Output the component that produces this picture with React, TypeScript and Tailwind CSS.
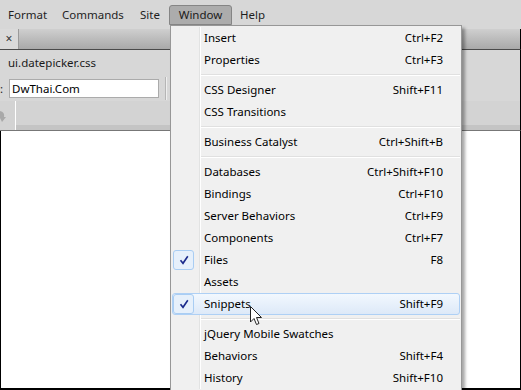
import React from "react";

const font = { fontFamily: '"Noto Sans", "Open Sans", sans-serif' };

type Item = { label?: string; sc?: string; check?: boolean; hl?: boolean; sep?: boolean };

const items: Item[] = [
  { label: "Insert", sc: "Ctrl+F2" },
  { label: "Properties", sc: "Ctrl+F3" },
  { sep: true },
  { label: "CSS Designer", sc: "Shift+F11" },
  { label: "CSS Transitions" },
  { sep: true },
  { label: "Business Catalyst", sc: "Ctrl+Shift+B" },
  { sep: true },
  { label: "Databases", sc: "Ctrl+Shift+F10" },
  { label: "Bindings", sc: "Ctrl+F10" },
  { label: "Server Behaviors", sc: "Ctrl+F9" },
  { label: "Components", sc: "Ctrl+F7" },
  { label: "Files", sc: "F8", check: true },
  { label: "Assets" },
  { label: "Snippets", sc: "Shift+F9", check: true, hl: true },
  { sep: true },
  { label: "jQuery Mobile Swatches" },
  { label: "Behaviors", sc: "Shift+F4" },
  { label: "History", sc: "Shift+F10" },
];

function Check() {
  return (
    <div className="w-[21px] h-[20px] ml-[1px] rounded-[3px] border border-[#a9cdf3] bg-[#e6f0fb] flex items-center justify-center">
      <svg width="10" height="10" viewBox="0 0 10 10">
        <path d="M1.5 5.2 L4 8.3 L8.8 1.2" fill="none" stroke="#1a2a8c" strokeWidth="1.6" />
      </svg>
    </div>
  );
}

function Row({ it }: { it: Item }) {
  if (it.sep) {
    return (
      <div className="h-[8px] flex">
        <div className="w-[27px]" />
        <div className="w-[1px] bg-[#e2e3e3]" />
        <div className="w-[1px] bg-white" />
        <div className="flex-1 flex flex-col pt-[3px]">
          <div className="h-[1px] bg-[#e0e0e0]" />
          <div className="h-[1px] bg-white" />
        </div>
      </div>
    );
  }
  return (
    <div
      className={
        "h-[22px] flex items-center text-[11.5px] text-[#000] " +
        (it.hl ? "rounded-[3px] border border-[#aed0f5] bg-gradient-to-b from-[#f2f8fe] to-[#dde9f8] " : "")
      }
    >
      <div className={"w-[27px] h-full flex items-center " + (it.hl ? "-ml-[1px]" : "")}>{it.check ? <Check /> : null}</div>
      <div className={"w-[1px] h-full " + (it.hl ? "" : "bg-[#e2e3e3]")} />
      <div className={"w-[1px] h-full " + (it.hl ? "" : "bg-white")} />
      <div className="flex-1 pl-[3px] leading-none">{it.label}</div>
      <div className={"pr-[17px] leading-none " + (it.hl ? "-mr-[1px]" : "")}>{it.sc}</div>
    </div>
  );
}

export default function App() {
  return (
    <div className="relative w-[521px] h-[390px] overflow-hidden bg-white flex flex-col" style={font}>
      {/* menubar */}
      <div className="h-[29px] bg-[#d7d7d7] flex items-start pt-[5px] pl-[8px] text-[11.5px] text-[#1e1e1e]">
        <div className="h-[20px] w-[54px] flex items-center">Format</div>
        <div className="h-[20px] w-[78px] flex items-center">Commands</div>
        <div className="h-[20px] w-[29px] flex items-center">Site</div>
        <div className="h-[20px] w-[63px] flex items-center justify-center rounded-t-[3px] border border-[#858585] bg-[#acacac] text-[#1a1a1a]">
          Window
        </div>
        <div className="h-[20px] flex items-center pl-[8px]">Help</div>
      </div>
      {/* tab row */}
      <div className="h-[21px] flex bg-gradient-to-b from-[#cfcfcf] to-[#a9a9a9] border-b border-[#4a4a4a] border-r border-r-black">
        <div className="w-[19px] bg-[#dadada] border-r border-[#9a9a9a] flex items-center justify-center text-[12px] text-[#333]">
          ×
        </div>
      </div>
      {/* file row */}
      <div className="h-[26px] bg-[#d7d7d7] flex items-center pl-[8px] text-[11.5px] text-[#1a1a1a] border-r border-black">
        ui.datepicker.css
      </div>
      {/* input row */}
      <div className="h-[25px] bg-[#d7d7d7] flex items-center text-[11.5px] border-r border-black">
        <span className="w-[9px] text-[#222]">:</span>
        <div className="w-[150px] h-[19px] bg-white border border-[#ababab] flex items-center pl-[2px] text-[#000]">DwThai.Com</div>
        <div className="ml-[6px] w-[2px] h-[23px] border-l border-[#b5b5b5] border-r border-r-[#eeeeee]" />
      </div>
      {/* toolbar */}
      <div className="h-[30px] bg-[#d3d3d3] flex border-b border-[#777] border-r border-r-black">
        <div className="w-[15px] flex items-center">
          <svg width="8" height="14" viewBox="0 0 8 14">
            <path d="M0 2 Q5 3 4 8 L6 8 L2 13 L0 9" fill="#a9a9a9" />
          </svg>
        </div>
        <div className="w-[1px] bg-white" />
        <div className="flex-1 flex flex-col">
          <div className="flex-1" />
          <div className="h-[5px] bg-[#c4c4c4]" />
        </div>
      </div>
      {/* content */}
      <div className="flex-1 bg-white border-l border-black border-r border-r-black border-b-2 border-b-black" />

      {/* dropdown menu */}
      <div className="absolute left-[170px] top-[25px] w-[292px] h-[380px] bg-[#f0f0f0] border border-[#979797] p-[1px] shadow-[3px_3px_3px_rgba(0,0,0,0.35)]">
        <div className="flex flex-col">
          {items.map((it, i) => (
            <Row key={i} it={it} />
          ))}
        </div>
      </div>

      {/* cursor */}
      <svg className="absolute left-[250px] top-[306px]" width="14" height="22" viewBox="0 0 14 22">
        <path d="M0.5 0.5 L0.5 16 L4 12.5 L6.5 18.5 L9 17.5 L6.5 11.5 L11.5 11.5 Z" fill="white" stroke="#222" strokeWidth="1" />
      </svg>
    </div>
  );
}
